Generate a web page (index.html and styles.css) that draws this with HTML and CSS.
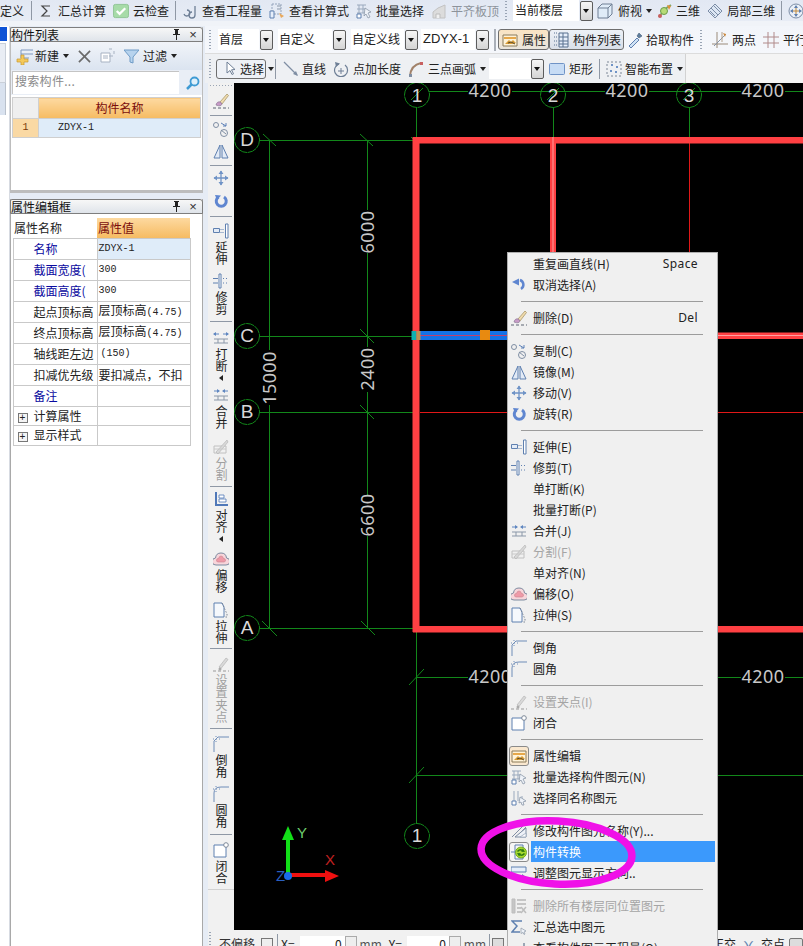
FILE: index.html
```html
<!DOCTYPE html>
<html lang="zh">
<head>
<meta charset="utf-8">
<title>构件列表</title>
<link rel="stylesheet" href="styles.css">
</head>
<body>
<svg class="sprite" xmlns="http://www.w3.org/2000/svg">
  <symbol id="i-pin" viewBox="0 0 9 11"><path d="M2 0h5v1H6v4h2v1H1V5h2V1H2zM4 6h1v5H4z" fill="#222"/></symbol>
  <symbol id="i-brush" viewBox="0 0 16 16"><path d="M7 9 14 1l1.500 1.500L9 11z" fill="#f1dcae" stroke="#a8986c" stroke-width=".8"/><path d="M3 12q1-4 4.500-3L9 11q-1 3-6 1z" fill="#c79ac6" stroke="#8c7896" stroke-width=".7"/><path d="M0 15h16" stroke="#5d6572" stroke-dasharray="3 2"/></symbol>
  <symbol id="i-copy" viewBox="0 0 16 16"><circle cx="3" cy="4" r="2.500" fill="none" stroke="#7f8ea3"/><circle cx="11" cy="12" r="3.500" fill="none" stroke="#7f8ea3"/><path d="M8 9l5 4" stroke="#7f8ea3"/><path d="M8 2l5 3M13 5V2M13 5h-3" fill="none" stroke="#5f82b8"/></symbol>
  <symbol id="i-mirror" viewBox="0 0 16 16"><path d="M7 2 1 15h6zM9 2l6 13H9z" fill="#e3ebf6" stroke="#5f80b0"/></symbol>
  <symbol id="i-move" viewBox="0 0 16 16"><path d="M8 1v14M1 8h14" stroke="#6f93c6" stroke-width="1.300"/><path d="M8 .5 5.500 4h5zM8 15.500 5.500 12h5zM.5 8 4 5.500v5zM15.500 8 12 5.500v5z" fill="#6f93c6"/></symbol>
  <symbol id="i-rotate" viewBox="0 0 16 16"><path d="M5.500 4a5 5 0 1 0 5.500 0" fill="none" stroke="#5f86d0" stroke-width="3"/><path d="M2 2l6 .5L4 7z" fill="#5f86d0"/></symbol>
  <symbol id="i-undo" viewBox="0 0 16 16"><path d="M9 3a5 5 0 0 1 1 9" fill="none" stroke="#5f86d0" stroke-width="2.500"/><path d="M1 5l7-3.500v7z" fill="#5f86d0"/></symbol>
  <symbol id="i-extend" viewBox="0 0 16 16"><path d="M.5 5.500h6v4h-6z" fill="#e3ebf6" stroke="#5f80b0"/><path d="M8 6v1M10 6v1M8 9v1M10 9v1" stroke="#5f80b0"/><path d="M12.500 1h2.500v14h-2.500z" fill="#fff" stroke="#5f80b0"/></symbol>
  <symbol id="i-trim" viewBox="0 0 16 16"><path d="M0 5.500h5M0 10h5" stroke="#5f80b0"/><path d="M6 1h2v14H6z" fill="#fff" stroke="#5f80b0"/><path d="M10 5.500h1M13 5.500h1M10 10h1M13 10h1" stroke="#5f80b0"/></symbol>
  <symbol id="i-break" viewBox="0 0 16 16"><path d="M1 4h5M10 4h5" stroke="#5f86c0"/><path d="M0 4l3-2v4zM16 4l-3-2v4z" fill="#5f86c0"/><path d="M1 9h14M1 13h14M5 9v4M11 9v4" stroke="#8a97a8" fill="none"/></symbol>
  <symbol id="i-merge" viewBox="0 0 16 16"><path d="M1 4h5M10 4h5" stroke="#5f86c0"/><path d="M7 4 4 2v4zM9 4l3-2v4z" fill="#5f86c0"/><path d="M1 9h14M1 13h14M5 9v4M11 9v4" stroke="#8a97a8" fill="none"/></symbol>
  <symbol id="i-split" viewBox="0 0 16 16"><path d="M1 7h12v7H1z" fill="none" stroke="#c0c0c0"/><path d="M3 13 14 1l1 2L5 15z" fill="#d8d8d8" stroke="#b0b0b0" stroke-width=".6"/><path d="M1 10h12" stroke="#c8c8c8"/></symbol>
  <symbol id="i-align" viewBox="0 0 16 16"><path d="M2 1h2v14H2zM2 13h13v2H2z" fill="#5078b8"/><path d="M6 4h5v3H6zM6 8h7v3H6z" fill="#fff" stroke="#5078b8" stroke-width=".8"/></symbol>
  <symbol id="i-offset" viewBox="0 0 16 16"><path d="M3 14a3.500 3.500 0 0 1-.500-7Q3 2 8 2t5.500 5a3.500 3.500 0 0 1-.500 7z" fill="#f7d5da" stroke="#7d8ba0"/><path d="M5 11a1.500 1.500 0 0 1 .500-3.500Q6 5 8 5t2.500 2.500A1.500 1.500 0 0 1 11 11z" fill="#ef9aa8" stroke="#c9828d" stroke-width=".6"/></symbol>
  <symbol id="i-stretch" viewBox="0 0 16 16"><path d="M1 1h8l2 4v10H1z" fill="#f5f8fc" stroke="#5f80b0"/><path d="M9 1l5 11M14 12v3h-3" fill="none" stroke="#7c8796" stroke-dasharray="1.500 1.500"/></symbol>
  <symbol id="i-chamfer" viewBox="0 0 16 16"><path d="M1 16V5L5 1h11" fill="none" stroke="#6f8db8"/><path d="M0 3h1M3 3h1M3 0v1M3 5v1M6 3h1" stroke="#6f8db8"/></symbol>
  <symbol id="i-fillet" viewBox="0 0 16 16"><path d="M1 16V7Q1 1 8 1h8" fill="none" stroke="#6f8db8"/><path d="M0 3h1M3 3h1M3 0v1M3 5v1M6 3h1" stroke="#6f8db8"/></symbol>
  <symbol id="i-grip" viewBox="0 0 16 16"><path d="M6 11 13 2l2 1.500L8 12.500z" fill="#d9d9d9" stroke="#b6b6b6" stroke-width=".7"/><path d="M0 15h16" stroke="#999" stroke-dasharray="3 2"/><circle cx="7" cy="13" r="1.500" fill="#aaa"/></symbol>
  <symbol id="i-close" viewBox="0 0 16 16"><path d="M1 3h12v12H1z" fill="#fff" stroke="#5f80b0"/><circle cx="13" cy="3" r="2.300" fill="#fff" stroke="#7c8796"/></symbol>
  <symbol id="i-prop" viewBox="0 0 16 16"><path d="M1 3h14v11H1z" fill="#fff3d8" stroke="#8a7a5a"/><path d="M2 5h12v2H2z" fill="#e7a84a"/><path d="M3 12l4-4 2 2 2-2 3 3-4 1z" fill="#d69a34"/><path d="M6 11l3-1 4 2" fill="none" stroke="#5a4a2a"/></symbol>
  <symbol id="i-batch" viewBox="0 0 16 16"><path d="M1 2h9M1 6h9M1 10h9M3 2v12M7 2v8" fill="none" stroke="#9aa9bd"/><path d="M1 11h4v4H1z" fill="#fff" stroke="#5f80b0"/><path d="M9 5l6 4-3 1 2 4-2 1-2-4-2 2z" fill="#eef2f8" stroke="#8c98a8" stroke-width=".8"/></symbol>
  <symbol id="i-same" viewBox="0 0 16 16"><path d="M3 1v14M7 1v10M11 6v4" stroke="#9aa9bd" fill="none"/><path d="M1 11h4v4H1z" fill="#fff" stroke="#5f80b0"/><path d="M9 7l6 4-3 1 1 3-2 0-1-3-2 1z" fill="#eef2f8" stroke="#8c98a8" stroke-width=".8"/></symbol>
  <symbol id="i-rename" viewBox="0 0 16 16"><path d="M1 14 13 2M5 14 15 4" stroke="#7f8ea3" fill="none"/><path d="M4 14l11-9v9z" fill="#eef2f8" stroke="#7f8ea3"/><path d="M9 14l6-4v4z" fill="#fff" stroke="#9aa9bd" stroke-width=".8"/></symbol>
  <symbol id="i-convert" viewBox="0 0 16 16"><path d="M4 1h8v4M4 1v14h8v-3" fill="none" stroke="#5f80b0"/><path d="M0 8h5" stroke="#5f80b0"/><circle cx="10" cy="8.500" r="5.500" fill="#a6d92f" stroke="#62a012" stroke-width=".8"/><path d="M6.500 7.500q3-3.500 6 0M13.500 9.500q-3 3.500-6 0" fill="none" stroke="#2f7a10" stroke-width="1.500"/><path d="M12 4.500l2 3.500-4-.5zM8 12.500 6 9l4 .5z" fill="#2f7a10"/></symbol>
  <symbol id="i-adjust" viewBox="0 0 16 16"><path d="M0 2h15v5H0z" fill="#e6eefa" stroke="#5f80b0"/><path d="M1 12h11" stroke="#5f80b0"/><path d="M15 12l-4-3v6z" fill="#5f80b0"/></symbol>
  <symbol id="i-delall" viewBox="0 0 16 16"><path d="M1 1h3v14H1z" fill="#c6c6c6" stroke="#bdbdbd"/><path d="M6 2h9M6 6h9M6 10h4M6 14h4" stroke="#b6b6b6" stroke-width="1.500"/><path d="M10 9l5 6M15 9l-5 6" stroke="#bdbdbd" stroke-width="1.500"/></symbol>
  <symbol id="i-sum" viewBox="0 0 16 16"><path d="M11 2H1l5 5-5 6h8" fill="none" stroke="#5f80b0" stroke-width="1.500"/><path d="M10 9l5 3-2 1 1 2-1 .5-1-2-2 1z" fill="#eef2f8" stroke="#8c98a8" stroke-width=".7"/></symbol>
  <symbol id="i-sigma" viewBox="0 0 16 16"><path d="M12 3H4l5 5-5 5h8" fill="none" stroke="#444" stroke-width="1.200"/></symbol>
  <symbol id="i-cloud" viewBox="0 0 17 16"><rect x=".5" y="1" width="16" height="14" rx="2" fill="#a7dba8" stroke="#8fc494"/><path d="M4 8l3 3 6-6" fill="none" stroke="#fff" stroke-width="2.400"/></symbol>
  <symbol id="i-qty" viewBox="0 0 16 16"><path d="M2 11a3 3 0 1 0 3-4" fill="none" stroke="#6e7f96" stroke-width="1.300"/><path d="M13 3v9a3 3 0 1 1-3-3" fill="none" stroke="#6e7f96" stroke-width="1.300"/></symbol>
  <symbol id="i-calc" viewBox="0 0 16 16"><path d="M3 1h9v10H3z" fill="none" stroke="#94a4bc" stroke-dasharray="2 1"/><path d="M1 8h4v7H1z" fill="#e6eefa" stroke="#5f80b0"/><path d="M8 3h4M8 6h4" stroke="#8a97a8"/><path d="M10 10l5 3-3 2z" fill="#e8a85c"/></symbol>
  <symbol id="i-flat" viewBox="0 0 16 16"><path d="M2 15V9l5-4 7-3v13z" fill="#dcdcdc" stroke="#c2c2c2"/><path d="M5 15v-4h4v4" fill="#f0f0f0" stroke="#bdbdbd"/></symbol>
  <symbol id="i-cube" viewBox="0 0 16 16"><path d="M1 5l4-4h10v10l-4 4H1z" fill="#e0ecf8" stroke="#6f7f94"/><path d="M1 5h10v10M11 5l4-4" fill="none" stroke="#6f7f94"/></symbol>
  <symbol id="i-3d" viewBox="0 0 16 16"><path d="M2 14 8 6l6-4" stroke="#7fa86a" fill="none" stroke-width="2"/><circle cx="7" cy="8" r="3.500" fill="#b6db76" stroke="#6c9c4c"/><path d="M10 2l4 1-2 4z" fill="#e09038"/><circle cx="3" cy="13" r="2" fill="#c86060"/></symbol>
  <symbol id="i-local" viewBox="0 0 16 16"><path d="M1 8l7-7 7 7-7 7z" fill="#dce6f3" stroke="#7c8da6"/><path d="M4 5l7 7M7 3l6 6M3 8l5 5" stroke="#7c8da6"/></symbol>
  <symbol id="i-pan" viewBox="0 0 16 16"><circle cx="8" cy="8" r="7" fill="#eaf0f8" stroke="#7c8da6"/><path d="M8 3v10M3 8h10" stroke="#c08a3c"/><path d="M8 2 6 5h4zM8 14l-2-3h4zM2 8l3-2v4zM14 8l-3-2v4z" fill="#5f80b0"/></symbol>
  <symbol id="i-new" viewBox="0 0 18 18"><path d="M5 3h12M5 7h12M5 11h8" stroke="#7f98bf"/><path d="M5 3v8" stroke="#7f98bf"/><path d="M1 12h4V8h3v4h4v3H8v3H5v-3H1z" fill="#f4c95a" stroke="#c79a32" stroke-width=".7"/></symbol>
  <symbol id="i-x" viewBox="0 0 14 14"><path d="M1 1l12 12M13 1 1 13" stroke="#6a6a6a" stroke-width="1.800"/></symbol>
  <symbol id="i-doc" viewBox="0 0 16 16"><path d="M1 5h9v9H1z" fill="#fff" stroke="#a7b2c2"/><path d="M3 8h5M3 10h5" stroke="#a7b2c2"/><path d="M9 1h3M14 3v3M9 8h4" stroke="#a7b2c2"/></symbol>
  <symbol id="i-funnel" viewBox="0 0 15 15"><path d="M0 1h15L9 8v6l-3-1V8z" fill="#b7d3ee" stroke="#6f9bc6"/></symbol>
  <symbol id="i-search" viewBox="0 0 14 14"><circle cx="8.500" cy="5.500" r="4" fill="#dff0fb" stroke="#3f9bd4" stroke-width="1.800"/><path d="M5.500 8.500 1 13" stroke="#3f9bd4" stroke-width="2.500"/></symbol>
  <symbol id="i-cols" viewBox="0 0 16 16"><path d="M1 1h3M1 5h3M1 9h3M1 13h3" stroke="#58718f" stroke-dasharray="1 1"/><path d="M6 1h9v14H6zM6 5h9M6 9h9M6 12h9M10 1v14" fill="#e6eefa" stroke="#58718f"/></symbol>
  <symbol id="i-pick" viewBox="0 0 16 16"><path d="M2 14 10 6l2 2-8 8z" fill="#cfe2f5" stroke="#5f80b0"/><path d="M10 4l2-3 3 3-3 2z" fill="#5f7e9e" stroke="#46607a" stroke-width=".6"/></symbol>
  <symbol id="i-two" viewBox="0 0 16 16"><path d="M5 0v16M0 12h16" stroke="#9a8b7a"/><path d="M2 14 14 2" stroke="#8794a6"/><path d="M10 0v10" stroke="#b2a08a"/><path d="M11 1l3 1-1 3z" fill="#d08a3c"/></symbol>
  <symbol id="i-par" viewBox="0 0 16 16"><path d="M5 0v16M11 0v16M0 5h16M0 11h16" stroke="#b08a8a"/></symbol>
  <symbol id="i-cursor" viewBox="0 0 14 16"><path d="M4 1v11l3-2.500 2 4 1.500-.7-2-4 3.500-.3z" fill="#fff" stroke="#6e7f96"/></symbol>
  <symbol id="i-line" viewBox="0 0 16 16"><path d="M1 1 14 14" stroke="#7f8ea3" stroke-width="1.300"/><path d="M15 15l-5-2 3-3z" fill="#7f8ea3"/></symbol>
  <symbol id="i-ptlen" viewBox="0 0 16 16"><path d="M6 3a6.500 6.500 0 1 0 6 1" fill="none" stroke="#6e7f96" stroke-width="1.200"/><path d="M2 1l5 1.500L3 6z" fill="#6e7f96"/><path d="M8 7v6M5 10h6" stroke="#6e7f96"/></symbol>
  <symbol id="i-arc" viewBox="0 0 16 16"><path d="M2 15Q3 4 13 2" fill="none" stroke="#a2826a" stroke-width="2"/><rect x="12" y="1" width="3" height="3" fill="#c86060"/><rect x="1" y="13" width="3" height="3" fill="#7f8ea3"/></symbol>
  <symbol id="i-rect" viewBox="0 0 16 16"><rect x=".5" y="2.500" width="15" height="11" rx="1" fill="#c7dcf5" stroke="#6f93c6"/></symbol>
  <symbol id="i-smart" viewBox="0 0 16 16"><path d="M1 1h14v14H1z" fill="none" stroke="#7c8796" stroke-dasharray="2 2"/><path d="M5 3h2v2H5zM10 5h2v2h-2zM4 9h2v2H4zM9 10h2v2H9z" fill="#6f93c6"/></symbol>
</svg>

<header class="topbar">
  <span class="ttext cut">定义</span>
  <span class="vsep"></span>
  <span class="tool after-sep"><svg class="ico"><use href="#i-sigma"/></svg>汇总计算</span>
  <span class="tool"><svg class="ico"><use href="#i-cloud"/></svg>云检查</span>
  <span class="vsep"></span>
  <span class="tool after-sep"><svg class="ico"><use href="#i-qty"/></svg>查看工程量</span>
  <span class="tool"><svg class="ico"><use href="#i-calc"/></svg>查看计算式</span>
  <span class="tool"><svg class="ico"><use href="#i-batch"/></svg>批量选择</span>
  <span class="tool muted"><svg class="ico"><use href="#i-flat"/></svg>平齐板顶</span>
  <span class="grip grip-top"></span>
  <span class="combo-field floor">当前楼层</span><span class="dd"></span>
  <span class="tool tight"><svg class="ico"><use href="#i-cube"/></svg>俯视</span><span class="caret"></span>
  <span class="tool tight2"><svg class="ico"><use href="#i-3d"/></svg>三维</span>
  <span class="tool"><svg class="ico"><use href="#i-local"/></svg>局部三维</span>
  <span class="vsep"></span>
  <span class="tool after-sep"><svg class="ico"><use href="#i-pan"/></svg></span>
</header>

<div class="main">
  <aside class="side">
    <div class="rail"><div class="rail-tab"></div><div class="rail-a"></div><div class="rail-b"></div></div>
    <div class="panels">
      <section class="panel list-panel">
        <div class="ptitle"><span>构件列表</span><svg class="pin"><use href="#i-pin"/></svg><span class="px">×</span></div>
        <div class="ptools">
          <svg class="ico18"><use href="#i-new"/></svg><span class="pt-new">新建</span><span class="caret"></span>
          <svg class="ico-x"><use href="#i-x"/></svg>
          <svg class="ico pt-doc"><use href="#i-doc"/></svg>
          <svg class="ico-f"><use href="#i-funnel"/></svg><span class="pt-filter">过滤</span><span class="caret"></span>
        </div>
        <div class="psearch"><span class="search-field">搜索构件...</span><svg class="ico-s"><use href="#i-search"/></svg></div>
        <table class="ctable">
          <tr><th class="corner"></th><th class="oh">构件名称</th></tr>
          <tr><td class="num">1</td><td class="sel mono">ZDYX-1</td></tr>
        </table>
      </section>
      <section class="panel prop-panel">
        <div class="ptitle"><span>属性编辑框</span><svg class="pin"><use href="#i-pin"/></svg><span class="px">×</span></div>
        <table class="ptable">
          <tr class="phead"><th>属性名称</th><th class="oh">属性值</th></tr>
          <tr><td class="name blue">名称</td><td class="sel mono">ZDYX-1</td></tr>
          <tr><td class="name blue">截面宽度(</td><td class="mono">300</td></tr>
          <tr><td class="name blue">截面高度(</td><td class="mono">300</td></tr>
          <tr><td class="name">起点顶标高</td><td>层顶标高<span class="mono">(4.75)</span></td></tr>
          <tr><td class="name">终点顶标高</td><td>层顶标高<span class="mono">(4.75)</span></td></tr>
          <tr><td class="name">轴线距左边</td><td class="mono pad">(150)</td></tr>
          <tr><td class="name">扣减优先级</td><td>要扣减点，不扣</td></tr>
          <tr><td class="name blue">备注</td><td></td></tr>
          <tr class="short"><td class="tree"><span class="plus">+</span>计算属性</td><td></td></tr>
          <tr class="short"><td class="tree"><span class="plus">+</span>显示样式</td><td></td></tr>
        </table>
      </section>
    </div>
  </aside>

  <div class="right">
    <div class="row2">
      <span class="grip g2"></span>
      <span class="combo-field f1">首层</span><span class="dd"></span>
      <span class="combo-field f2">自定义</span><span class="dd"></span>
      <span class="combo-field f3">自定义线</span><span class="dd"></span>
      <span class="combo-field f4">ZDYX-1</span><span class="dd"></span>
      <span class="vsep dbl"></span>
      <span class="btn b-prop"><svg class="ico"><use href="#i-prop"/></svg>属性</span>
      <span class="btn b-list"><svg class="ico"><use href="#i-cols"/></svg>构件列表</span>
      <span class="tool m4"><svg class="ico"><use href="#i-pick"/></svg>拾取构件</span>
      <span class="grip g3"></span>
      <span class="tool m10"><svg class="ico"><use href="#i-two"/></svg>两点</span>
      <span class="tool"><svg class="ico"><use href="#i-par"/></svg>平行</span>
    </div>
    <div class="row3">
      <div class="row3-in">
        <span class="grip g2"></span>
        <span class="btn b-select"><svg class="ico-c"><use href="#i-cursor"/></svg>选择</span><span class="caret c-s"></span>
        <span class="vsep s3"></span>
        <span class="tool"><svg class="ico"><use href="#i-line"/></svg>直线</span>
        <span class="tool"><svg class="ico"><use href="#i-ptlen"/></svg>点加长度</span>
        <span class="tool"><svg class="ico"><use href="#i-arc"/></svg>三点画弧</span><span class="caret c-a"></span>
        <span class="combo-field f5"></span><span class="dd"></span>
        <span class="tool m5"><svg class="ico"><use href="#i-rect"/></svg>矩形</span>
        <span class="vsep s4"></span>
        <span class="tool"><svg class="ico"><use href="#i-smart"/></svg>智能布置</span><span class="caret c-b"></span>
      </div>
    </div>

    <div class="work">
      <nav class="vtools">
        <div class="vgrip"></div>
        <div class="vbtn t7"><svg class="ico"><use href="#i-brush"/></svg></div>
        <div class="vs t6"></div>
        <div class="vbtn t5"><svg class="ico"><use href="#i-copy"/></svg></div>
        <div class="vbtn t6"><svg class="ico"><use href="#i-mirror"/></svg></div>
        <div class="vs t6"></div>
        <div class="vbtn t4"><svg class="ico"><use href="#i-move"/></svg></div>
        <div class="vbtn t7"><svg class="ico"><use href="#i-rotate"/></svg></div>
        <div class="vs t7"></div>
        <div class="vbtn t6"><svg class="ico"><use href="#i-extend"/></svg><span class="vl">延伸</span></div>
        <div class="vbtn t7"><svg class="ico"><use href="#i-trim"/></svg><span class="vl">修剪</span></div>
        <div class="vs t5"></div>
        <div class="vbtn t8"><svg class="ico"><use href="#i-break"/></svg><span class="vl">打断</span><span class="vcaret"></span></div>
        <div class="vbtn t6"><svg class="ico"><use href="#i-merge"/></svg><span class="vl">合并</span></div>
        <div class="vbtn t9 off"><svg class="ico"><use href="#i-split"/></svg><span class="vl">分割</span></div>
        <div class="vs t4"></div>
        <div class="vbtn t4"><svg class="ico"><use href="#i-align"/></svg><span class="vl">对齐</span><span class="vcaret"></span></div>
        <div class="vbtn t9"><svg class="ico"><use href="#i-offset"/></svg><span class="vl">偏移</span></div>
        <div class="vbtn t8"><svg class="ico"><use href="#i-stretch"/></svg><span class="vl">拉伸</span></div>
        <div class="vs t3"></div>
        <div class="vbtn t7 off"><svg class="ico"><use href="#i-grip"/></svg><span class="vl">设置夹点</span></div>
        <div class="vs t4"></div>
        <div class="vbtn t7"><svg class="ico"><use href="#i-chamfer"/></svg><span class="vl">倒角</span></div>
        <div class="vbtn t7"><svg class="ico"><use href="#i-fillet"/></svg><span class="vl">圆角</span></div>
        <div class="vs t5"></div>
        <div class="vbtn t7"><svg class="ico"><use href="#i-close"/></svg><span class="vl">闭合</span></div>
        <div class="vend"></div>
      </nav>

      <div class="canvas">
        <svg class="cad" viewBox="234 83 569 847" xmlns="http://www.w3.org/2000/svg">
          <g class="thin-red">
            <path d="M689.500 143V412M420 412.500H803"/>
          </g>
          <g class="g-line">
            <path d="M429 91.500H803"/>
            <path d="M416.500 107V628M553.500 107V137M689.500 107V137"/>
            <path d="M259 140.500H416M259 336.500H416M259 412.500H416M259 628.500H416"/>
            <path d="M269.500 140V628M367.500 140V628"/>
            <path d="M416.500 628V824"/>
            <path d="M416 677.500H803M416 775.500H803"/>
            <path d="M263 134 276 146M360 134 373 146M360 329 374 343M360 405 374 419M262 621 277 636M361 621 375 635M416 142 411 137"/>
            <path d="M409 685 424 669M409 783 424 767"/>
            <path d="M411 100 423 88M547 100 559 88M683 100 695 88"/>
          </g>
          <g class="rings">
            <circle cx="417" cy="95" r="12.500"/><circle cx="553" cy="95" r="12.500"/><circle cx="689" cy="95" r="12.500"/>
            <circle cx="247" cy="140" r="12.500"/><circle cx="247" cy="336" r="12.500"/><circle cx="247" cy="412" r="12.500"/><circle cx="247" cy="628" r="12.500"/>
            <circle cx="417" cy="836" r="12.500"/>
          </g>
          <g class="mask">
            <rect x="468" y="82" width="44" height="18"/><rect x="605" y="82" width="44" height="18"/><rect x="741" y="82" width="44" height="18"/>
            <rect x="359" y="210" width="17" height="43"/><rect x="359" y="347" width="17" height="45"/><rect x="359" y="495" width="17" height="41"/><rect x="261" y="350" width="17" height="55"/>
            <rect x="468" y="668" width="44" height="18"/><rect x="741" y="668" width="44" height="18"/>
          </g>
          <g class="labels">
            <text x="417" y="102">1</text><text x="553" y="102">2</text><text x="689" y="102">3</text>
            <text x="247" y="146">D</text><text x="247" y="342">C</text><text x="247" y="418">B</text><text x="247" y="634">A</text>
            <text x="417" y="842">1</text>
          </g>
          <g class="dims">
            <text x="490" y="97">4200</text><text x="627" y="97">4200</text><text x="763" y="97">4200</text>
            <text x="490" y="683">4200</text><text x="763" y="683">4200</text>
            <text transform="translate(373.500 232) rotate(-90)">6000</text>
            <text transform="translate(373.500 369) rotate(-90)">2400</text>
            <text transform="translate(373.500 515) rotate(-90)">6600</text>
            <text transform="translate(275.500 378) rotate(-90)">15000</text>
          </g>
          <g class="walls">
            <rect x="413" y="137" width="390" height="6.500"/>
            <rect x="412.500" y="137" width="7" height="495"/>
            <rect x="413" y="626" width="390" height="6.500"/>
            <rect x="550" y="137" width="6" height="115"/>
            <rect x="718" y="332.500" width="85" height="6.500"/>
          </g>
          <path class="pale" d="M718 335.500H803M553 137V252"/>
          <rect class="wall-b" x="420" y="331" width="90" height="9"/>
          <path class="wall-c" d="M420 335.500H510"/>
          <rect class="grip-t" x="411.500" y="331" width="5" height="9"/><rect class="grip-u" x="416.500" y="331" width="4" height="9"/><rect class="grip-o" x="480" y="330" width="10" height="10"/>
          <g class="axes">
            <path class="ax-y" d="M288 875V838"/><path class="ay" d="M288 826 282 840H294z"/>
            <path class="ax-x" d="M288 875H326"/><path class="ax" d="M339 876 325 870V882z"/>
            <circle class="az" cx="288" cy="876" r="4"/>
            <text class="ty" x="297" y="838">Y</text><text class="tx" x="325" y="865">X</text><text class="tz" x="276" y="881">Z</text>
          </g>
        </svg>
      </div>
    </div>

    <footer class="status">
      <span class="grip g2"></span>
      <span class="st-off">不偏移</span><span class="st-dd"></span>
      <span class="vsep s5"></span>
      <span class="st-x">X=</span><span class="st-in">0</span><span class="st-sp"></span><span class="st-u">mm</span>
      <span class="st-y">Y=</span><span class="st-in in2">0</span><span class="st-sp"></span><span class="st-u">mm</span>
      <span class="vsep s6"></span>
      <span class="st-box"></span>
      <span class="st-right"><span>正交</span><span class="st-cross">⋎</span><span>交点</span><span class="st-box b2"></span></span>
    </footer>
  </div>
</div>

<div class="menu">
  <div class="mi"><span class="mic"></span><span class="ml">重复画直线(H)</span><span class="mk">Space</span></div>
  <div class="mi"><span class="mic"><svg class="ico"><use href="#i-undo"/></svg></span><span class="ml">取消选择(A)</span></div>
  <div class="msep"></div>
  <div class="mi"><span class="mic"><svg class="ico"><use href="#i-brush"/></svg></span><span class="ml">删除(D)</span><span class="mk">Del</span></div>
  <div class="msep"></div>
  <div class="mi"><span class="mic"><svg class="ico"><use href="#i-copy"/></svg></span><span class="ml">复制(C)</span></div>
  <div class="mi"><span class="mic"><svg class="ico"><use href="#i-mirror"/></svg></span><span class="ml">镜像(M)</span></div>
  <div class="mi"><span class="mic"><svg class="ico"><use href="#i-move"/></svg></span><span class="ml">移动(V)</span></div>
  <div class="mi"><span class="mic"><svg class="ico"><use href="#i-rotate"/></svg></span><span class="ml">旋转(R)</span></div>
  <div class="msep"></div>
  <div class="mi"><span class="mic"><svg class="ico"><use href="#i-extend"/></svg></span><span class="ml">延伸(E)</span></div>
  <div class="mi"><span class="mic"><svg class="ico"><use href="#i-trim"/></svg></span><span class="ml">修剪(T)</span></div>
  <div class="mi"><span class="mic"></span><span class="ml">单打断(K)</span></div>
  <div class="mi"><span class="mic"></span><span class="ml">批量打断(P)</span></div>
  <div class="mi"><span class="mic"><svg class="ico"><use href="#i-merge"/></svg></span><span class="ml">合并(J)</span></div>
  <div class="mi off"><span class="mic"><svg class="ico"><use href="#i-split"/></svg></span><span class="ml">分割(F)</span></div>
  <div class="mi"><span class="mic"></span><span class="ml">单对齐(N)</span></div>
  <div class="mi"><span class="mic"><svg class="ico"><use href="#i-offset"/></svg></span><span class="ml">偏移(O)</span></div>
  <div class="mi"><span class="mic"><svg class="ico"><use href="#i-stretch"/></svg></span><span class="ml">拉伸(S)</span></div>
  <div class="msep"></div>
  <div class="mi"><span class="mic"><svg class="ico"><use href="#i-chamfer"/></svg></span><span class="ml">倒角</span></div>
  <div class="mi"><span class="mic"><svg class="ico"><use href="#i-fillet"/></svg></span><span class="ml">圆角</span></div>
  <div class="msep"></div>
  <div class="mi off"><span class="mic"><svg class="ico"><use href="#i-grip"/></svg></span><span class="ml">设置夹点(I)</span></div>
  <div class="mi"><span class="mic"><svg class="ico"><use href="#i-close"/></svg></span><span class="ml">闭合</span></div>
  <div class="msep"></div>
  <div class="mi"><span class="mic boxed orange"><svg class="ico"><use href="#i-prop"/></svg></span><span class="ml">属性编辑</span></div>
  <div class="mi"><span class="mic"><svg class="ico"><use href="#i-batch"/></svg></span><span class="ml">批量选择构件图元(N)</span></div>
  <div class="mi"><span class="mic"><svg class="ico"><use href="#i-same"/></svg></span><span class="ml">选择同名称图元</span></div>
  <div class="msep"></div>
  <div class="mi"><span class="mic"><svg class="ico"><use href="#i-rename"/></svg></span><span class="ml">修改构件图元名称(Y)...</span></div>
  <div class="mi hot"><span class="mic boxed"><svg class="ico"><use href="#i-convert"/></svg></span><span class="ml">构件转换</span></div>
  <div class="mi"><span class="mic"><svg class="ico"><use href="#i-adjust"/></svg></span><span class="ml">调整图元显示方向..</span></div>
  <div class="msep"></div>
  <div class="mi off"><span class="mic"><svg class="ico"><use href="#i-delall"/></svg></span><span class="ml">删除所有楼层同位置图元</span></div>
  <div class="mi"><span class="mic"><svg class="ico"><use href="#i-sum"/></svg></span><span class="ml">汇总选中图元</span></div>
  <div class="mi"><span class="mic"><svg class="ico"><use href="#i-qty"/></svg></span><span class="ml">查看构件图元工程量(Q)</span></div>
</div>

<svg class="annot" viewBox="470 810 175 85" xmlns="http://www.w3.org/2000/svg">
  <ellipse cx="556.500" cy="852.500" rx="75.500" ry="31.500" transform="rotate(3 556.500 852.500)"/>
</svg>
</body>
</html>
```

FILE: styles.css
```css
* { box-sizing: border-box; }
html, body { margin: 0; padding: 0; }
body {
  position: relative;
  width: 803px;
  height: 946px;
  overflow: hidden;
  background: #e6ecf5;
  font: 12px/16px "Noto Sans CJK SC", "Liberation Sans", sans-serif;
  color: #222;
}
.sprite { display: none; }

.ico { width: 16px; height: 16px; flex: none; display: block; }
.ico18 { width: 18px; height: 18px; flex: none; }
.ico-x { width: 13px; height: 13px; margin-left: 9px; flex: none; }
.ico-f { width: 15px; height: 15px; margin-left: 8px; flex: none; }
.ico-s { width: 14px; height: 14px; margin-left: 7px; flex: none; }
.ico-c { width: 14px; height: 16px; flex: none; }

/* top toolbar */
.topbar {
  display: flex;
  align-items: center;
  height: 26px;
  padding-bottom: 5px;
  background: linear-gradient(#e2e8f3, #e7ecf5 80%, #f0f3f8 80%);
  white-space: nowrap;
  overflow: hidden;
}
.ttext { display: block; flex: none; }
.cut { width: 25px; overflow: hidden; }
.tool { display: inline-flex; align-items: center; gap: 4px; margin-left: 7px; flex: none; white-space: nowrap; }
.tool.after-sep { margin-left: 6px; }
.tool.muted { color: #8d939b; }
.tool.tight { margin-left: 4px; gap: 5px; }
.tool.tight2 { margin-left: 5px; gap: 3px; }
.vsep { width: 1px; height: 19px; background: #8f98a5; margin-left: 6px; flex: none; }
.grip { width: 2px; height: 20px; flex: none; background: repeating-linear-gradient(#9aa5b5 0 1px, transparent 1px 3px); }
.grip-top { margin-left: 6px; }
.combo-field {
  display: block;
  height: 21px;
  line-height: 20px;
  background: #fff;
  padding-left: 1px;
  flex: none;
  overflow: hidden;
  white-space: nowrap;
}
.floor { width: 66px; margin-left: 6px; padding-left: 2px; }
.dd {
  position: relative;
  display: block;
  width: 13px;
  height: 20px;
  margin-left: 1px;
  flex: none;
  background: linear-gradient(#f6f6f6, #d4d4d4);
  border: 1px solid #5c5c5c;
  border-radius: 2px;
}
.dd::after {
  content: "";
  position: absolute;
  left: 2px;
  top: 7px;
  border: 3.500px solid transparent;
  border-top: 4px solid #111;
  border-bottom: 0;
}
.caret {
  display: block;
  width: 0;
  height: 0;
  margin-left: 4px;
  flex: none;
  border: 3px solid transparent;
  border-top: 4px solid #222;
  border-bottom: 0;
}

/* main layout */
.main { display: flex; height: 920px; }
.side { display: flex; width: 205px; flex: none; }
.rail { width: 10px; flex: none; padding-top: 1px; background: #fff; border-right: 1px solid #d7dbe2; }
.rail-tab { width: 7px; height: 14px; background: #0d52d6; }
.rail-a { width: 6px; height: 40px; margin-top: 2px; background: #e9edf4; border: solid #c9cfd8; border-width: 1px 1px 1px 0; }
.rail-b { width: 6px; height: 32px; background: #d9e2ef; border-right: 1px solid #b9c1cc; }
.panels { display: flex; flex-direction: column; width: 193px; flex: none; padding-top: 1px; }

.panel { background: #fff; }
.list-panel { height: 166px; border: solid #bdbdbd; border-width: 0 1px 3px; }
.prop-panel { flex: 1; margin-top: 6px; border-left: 1px solid #a9a9a9; border-right: 1px solid #a9a9a9; }
.ptitle {
  display: flex;
  align-items: center;
  height: 15px;
  margin: 0 -1px;
  border: 1px solid #7e7e7e;
  border-radius: 2px 3px 0 0;
  background: linear-gradient(#f7f7f7, #dfe4ea);
  line-height: 13px;
  color: #111;
  white-space: nowrap;
}
.pin { width: 9px; height: 11px; margin-left: auto; flex: none; }
.px { width: 12px; margin: 0 3px 0 6px; font: 13px/13px "Liberation Sans", sans-serif; color: #333; text-align: center; }

.ptools {
  display: flex;
  align-items: center;
  height: 28px;
  padding-left: 5px;
  background: linear-gradient(#f1f4f9, #dbe4f0);
}
.pt-new { margin-left: 1px; }
.pt-doc { margin-left: 9px; }
.pt-filter { margin-left: 4px; }
.psearch { display: flex; align-items: center; height: 25px; padding-left: 1px; background: #e9eef6; }
.search-field {
  display: block;
  width: 167px;
  height: 23px;
  padding: 1px 0 0 2px;
  line-height: 16px;
  background: #fff;
  color: #8a8a8a;
  border-left: 1px solid #c4c4c4;
  border-top: 1px solid #c4c4c4;
  letter-spacing: .3px;
}

.ctable {
  width: 189px;
  margin: 2px 0 0 1px;
  border-collapse: collapse;
  table-layout: fixed;
}
.ctable th, .ctable td { border: 1px solid #cfcfcf; padding: 0; font-weight: 400; }
.ctable tr:first-child { height: 21px; }
.ctable tr:nth-child(2) { height: 19px; }
.corner { width: 26px; background: #efefef; }
.oh {
  background: linear-gradient(#fdd9a0, #f6bb62);
  color: #7a0d0d;
  text-align: center;
}
.num { background: #fad9a4; color: #7a3a0a; text-align: center; font: 10px/16px "Liberation Mono", monospace; }
.sel { background: #dfecf9; }
.ctable .sel { padding-left: 19px; }
.mono { font: 10px/16px "Liberation Mono", monospace; }

.ptable {
  width: 178px;
  margin: 4px 0 0 1.500px;
  border-collapse: collapse;
  table-layout: fixed;
}
.ptable th, .ptable td {
  height: 21px;
  padding: 0 0 0 1px;
  border: 1px solid #c9c9c9;
  font-weight: 400;
  white-space: nowrap;
  overflow: hidden;
}
.ptable th:first-child, .ptable td:first-child { width: 84px; border-left-color: #c9c9c9; }
.ptable .phead th { height: 20px; border: 0; text-align: left; }
.ptable .phead .oh { text-align: left; }
.ptable .name { padding-left: 20px; }
.ptable .blue { color: #0a0aa0; }
.ptable .pad { padding-left: 3px; }
.ptable .short td { height: 19.500px; }
.ptable .tree { padding-left: 4px; }
.plus {
  display: inline-block;
  width: 10px;
  height: 10px;
  margin-right: 6px;
  border: 1px solid #777;
  background: #f4f4f4;
  font: 10px/8px "Liberation Sans", sans-serif;
  text-align: center;
}

/* right side */
.right { display: flex; flex-direction: column; flex: 1; min-width: 0; height: 920px; }
.row2 {
  display: flex;
  align-items: center;
  height: 28px;
  padding-left: 4px;
  flex: none;
  overflow: hidden;
  white-space: nowrap;
  background: linear-gradient(#f2f5fa, #f5f7fb);
  border-bottom: 1px solid #dcdcdc;
}
.g2 { margin-right: 7px; }
.f1 { width: 41px; }
.f2 { width: 54px; margin-left: 5px; }
.f3 { width: 53px; margin-left: 5px; }
.f4 { width: 54px; margin-left: 3px; padding-left: 2px; font-family: "Liberation Sans", sans-serif; font-size: 13px; }
.dbl { width: 2px; height: 22px; margin: 0 2px 0 5px; background: #a9afb8; }
.btn {
  display: inline-flex;
  align-items: center;
  gap: 4px;
  height: 21px;
  flex: none;
  padding-left: 5px;
  border: 1px solid #6e6e6e;
  border-radius: 3px;
  white-space: nowrap;
}
.b-prop { width: 51px; background: linear-gradient(#fae4c3, #e9e5dd); padding-left: 3px; }
.b-list { width: 75px; background: linear-gradient(#edf1f7, #d9dfe8); padding-left: 3px; }
.m4 { margin-left: 3px; gap: 3px; }
.g3 { margin-left: 6px; }
.m10 { margin-left: 10px; }

.row3 { height: 29px; flex: none; background: #f4f4f4; }
.row3-in {
  display: flex;
  align-items: center;
  width: 481px;
  height: 29px;
  padding-left: 4px;
  background: #eef0f3;
  border-right: 1px solid #d2d2d2;
  white-space: nowrap;
}
.row3-in .g2 { margin-right: 5px; }
.b-select { width: 50px; height: 20px; padding-left: 6px; gap: 3px; background: #eef1f6; }
.c-s { margin-left: 2px; }
.s3 { margin-left: 1px; height: 20px; }
.row3-in .s3 + .tool { margin-left: 7px; gap: 3px; }
.c-a { margin-left: 4px; }
.f5 { width: 42px; margin-left: 3px; }
.m5 { margin-left: 5px; }
.s4 { margin-left: 6px; height: 20px; }
.row3-in .s4 + .tool { margin-left: 6px; gap: 3px; }
.row3-in .dd { margin-left: 0; }

.work { display: flex; flex: 1; min-height: 0; }
.vtools {
  display: flex;
  flex-direction: column;
  align-items: center;
  width: 26px;
  margin-left: 3px;
  flex: none;
  background: #f1f1f1;
}
.vgrip { width: 22px; height: 1px; margin-top: 2px; background: repeating-linear-gradient(90deg, #9aa5b5 0 1px, transparent 1px 3px); }
.vbtn { display: flex; flex-direction: column; align-items: center; }
.vbtn.off { color: #a0a0a0; }
.vl {
  margin-top: 2px;
  writing-mode: vertical-rl;
  text-orientation: upright;
  font-size: 12px;
  line-height: 12px;
  letter-spacing: .5px;
}
.vcaret { margin-top: 2px; width: 0; height: 0; border: 3px solid transparent; border-right: 4px solid #222; border-left: 0; }
.vs { width: 22px; height: 1px; background: #8f98a5; flex: none; }
.vend { width: 26px; height: 1px; margin-top: 4px; background: #d2d2d2; }
.t3 { margin-top: 3px; } .t4 { margin-top: 4px; } .t5 { margin-top: 5px; } .t6 { margin-top: 6px; }
.t7 { margin-top: 7px; } .t8 { margin-top: 8px; } .t9 { margin-top: 9px; }

.canvas { flex: 1; background: #000; min-width: 0; }
.cad { display: block; width: 569px; height: 847px; }
.g-line path { stroke: #12871a; stroke-width: 1; fill: none; }
.thin-red path { stroke: #e01818; stroke-width: 1; fill: none; }
.rings circle { fill: none; stroke: #12871a; stroke-width: 1; stroke-dasharray: 9 .5; }
.mask rect { fill: #000; }
.labels text { fill: #d8d8d8; font: 19px "Liberation Sans", sans-serif; text-anchor: middle; }
.dims text { fill: #c8c8c8; font: 18px "Noto Sans", sans-serif; text-anchor: middle; letter-spacing: .4px; }
.walls rect { fill: #ff4043; }
.pale { stroke: #ffa0a0; stroke-width: 1; fill: none; }
.wall-b { fill: #1472e6; }
.wall-c { stroke: #c04070; stroke-width: 1; }
.grip-t { fill: #10b0b0; }
.grip-u { fill: #c09050; }
.grip-o { fill: #e88a10; }
.ax-y { stroke: #12e018; stroke-width: 4; }
.ay { fill: #12e018; }
.ax-x { stroke: #f01010; stroke-width: 4; }
.ax { fill: #f01010; }
.az { fill: #1a6ae8; }
.axes text { font: 15px "Liberation Sans", sans-serif; font-weight: 400; }
.ty { fill: #6fd06f; }
.tx { fill: #c02020; }
.tz { fill: #2a5fc0; }

.status {
  display: flex;
  align-items: flex-start;
  height: 30px;
  margin: 0 0 -14px 3px;
  flex: none;
  padding: 6px 0 0 1px;
  background: #f1f1f1;
  white-space: nowrap;
}
.status .grip { margin-top: -4px; height: 16px; }
.st-off { margin-left: 1px; color: #333; }
.st-dd { width: 12px; height: 14px; margin: 2px 0 0 6px; border: 1px solid #777; background: #eee; flex: none; }
.s5 { margin: -2px 0 0 4px; height: 18px; }
.st-x { margin-left: 3px; }
.st-in { width: 45px; height: 16px; margin-left: 5px; padding-right: 3px; background: #fff; text-align: right; }
.st-sp { width: 12px; height: 14px; border: 1px solid #aaa; background: #eee; flex: none; }
.st-u { margin-left: 3px; color: #555; }
.st-y { margin-left: 7px; }
.in2 { width: 42px; }
.s6 { margin: -2px 0 0 3px; height: 18px; }
.st-box { width: 12px; height: 14px; margin: 2px 0 0 2px; border: 1px solid #777; background: #ddd; flex: none; }
.st-right { display: flex; margin-left: auto; }
.st-cross { width: 25px; text-align: center; color: #5f80b0; font-size: 15px; }
.b2 { margin-left: 4px; width: 14px; border-radius: 2px; }

/* context menu */
.menu {
  position: absolute;
  left: 507px;
  top: 252px;
  width: 211px;
  padding: 0 2px 0 1px;
  background: #f0f0f0;
  border: 1px solid #aeaeae;
  color: #222;
}
.mi { display: flex; align-items: center; height: 21px; white-space: nowrap; }
.mic { display: flex; align-items: center; justify-content: center; width: 20px; height: 21px; flex: none; }
.mic.boxed { height: 20px; border: 1px solid #8a8a8a; border-radius: 3px; background: #f6f6f6; }
.mic.boxed.orange { background: #fae8cf; }
.ml { margin-left: 4px; line-height: 21px; }
.mk { margin-left: auto; padding-right: 17px; font-family: "Noto Sans", sans-serif; letter-spacing: .4px; }
.mi.off { color: #a5a5a5; }
.msep { height: 12px; margin: 0 12px; background: linear-gradient(#9c9c9c, #9c9c9c) center / 100% 1px no-repeat; }
.mi.hot .ml { flex: 1; margin-left: 2px; padding-left: 2px; background: #3b99fc; color: #fff; }

.annot { position: absolute; left: 470px; top: 810px; width: 175px; height: 85px; }
.annot ellipse { fill: none; stroke: #f011e8; stroke-width: 7.500; }
```
